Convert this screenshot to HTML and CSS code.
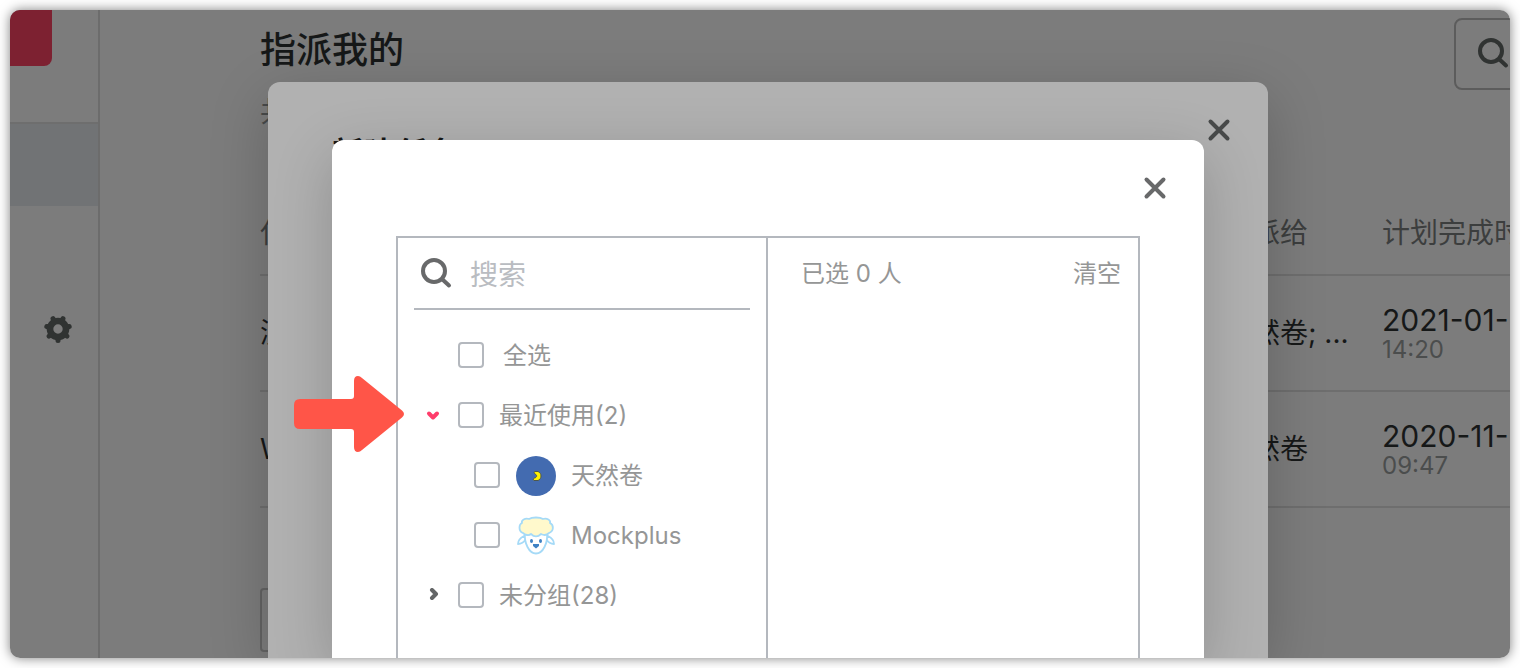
FILE: index.html
```html
<!DOCTYPE html>
<html lang="zh-CN">
<head>
<meta charset="utf-8">
<title>指派我的</title>
<link rel="stylesheet" href="styles.css">
</head>
<body>
<div class="frame">
  <nav class="sidebar" aria-label="导航">
    <div class="sidebar-top"><span class="brand"></span></div>
    <div class="sidebar-active"></div>
    <button class="icon-button settings" type="button" aria-label="设置">
      <svg width="30" height="30" viewBox="-15 -15 30 30" aria-hidden="true">
        <g stroke="#303332" stroke-width="5" stroke-linecap="round" stroke-linejoin="round" fill="none">
          <path d="M0 8V11.500"/>
          <path d="M0 8V11.500" transform="rotate(51.43)"/>
          <path d="M0 8V11.500" transform="rotate(102.86)"/>
          <path d="M0 8V11.500" transform="rotate(154.29)"/>
          <path d="M0 8V11.500" transform="rotate(205.71)"/>
          <path d="M0 8V11.500" transform="rotate(257.14)"/>
          <path d="M0 8V11.500" transform="rotate(308.57)"/>
          <circle r="8" stroke-width="6.600"/>
        </g>
      </svg>
    </button>
  </nav>

  <main class="main">
    <header class="main-header">
      <h1 class="title">指派我的</h1>
      <button class="search-box" type="button" aria-label="搜索任务">
        <svg width="32" height="32" viewBox="0 0 32 32" fill="none" stroke="#303332" stroke-width="4" stroke-linecap="round" aria-hidden="true"><circle cx="14" cy="13" r="11"/><path d="M22.500 21.500L29 27.500"/></svg>
      </button>
    </header>
    <p class="count">共 2 条</p>
    <table class="tasks">
      <colgroup><col><col class="col-assignee"><col class="col-date"></colgroup>
      <thead>
        <tr><th>任务名称</th><th>指派给</th><th>计划完成时</th></tr>
      </thead>
      <tbody>
        <tr><td>测试</td><td>天然卷; ...</td><td class="date">2021-01-<span class="time">14:20</span></td></tr>
        <tr><td>Web</td><td>天然卷</td><td class="date">2020-11-<span class="time">09:47</span></td></tr>
      </tbody>
    </table>
    <button class="pager" type="button" aria-label="上一页"></button>
  </main>

  <div class="layer">
    <section class="dialog dialog-back" aria-label="新建任务">
      <h2 class="dialog-title">新建任务</h2>
      <button class="icon-button close" type="button" aria-label="关闭新建任务">
        <svg width="24" height="24" viewBox="0 0 24 24" fill="none" stroke="#484a4a" stroke-width="4" stroke-linecap="round" aria-hidden="true"><path d="M3.500 3.500L20.500 20.500M20.500 3.500L3.500 20.500"/></svg>
      </button>
    </section>
  </div>

  <div class="layer layer-front">
    <section class="dialog dialog-front" role="dialog" aria-label="选择成员">
      <button class="icon-button close" type="button" aria-label="关闭">
        <svg width="24" height="24" viewBox="0 0 24 24" fill="none" stroke="#68696a" stroke-width="4" stroke-linecap="round" aria-hidden="true"><path d="M3.500 3.500L20.500 20.500M20.500 3.500L3.500 20.500"/></svg>
      </button>
      <div class="picker">
        <div class="candidates">
          <label class="search">
            <svg width="32" height="32" viewBox="0 0 32 32" fill="none" stroke="#68696a" stroke-width="4" stroke-linecap="round" aria-hidden="true"><circle cx="14" cy="14" r="11"/><path d="M22.500 22.500L29 28.500"/></svg>
            <input class="search-input" type="text" placeholder="搜索" aria-label="搜索成员">
          </label>
          <ul class="tree">
            <li class="row">
              <span class="toggle"></span>
              <label class="choice"><input class="check" type="checkbox"><span class="name all">全选</span></label>
            </li>
            <li class="row">
              <button class="icon-button toggle" type="button" aria-label="收起最近使用">
                <svg width="14" height="14" viewBox="0 0 14 14" fill="none" stroke="#ff3d6b" stroke-width="4" stroke-linecap="round" stroke-linejoin="round" aria-hidden="true"><path d="M3 5.500L7 9.500L11 5.500"/></svg>
              </button>
              <label class="choice"><input class="check" type="checkbox"><span class="name">最近使用(2)</span></label>
            </li>
            <li class="row row-child">
              <label class="choice"><input class="check" type="checkbox">
                <svg class="avatar" width="42" height="42" viewBox="0 0 42 42" aria-hidden="true"><g transform="translate(1 2)"><circle cx="20" cy="20" r="20" fill="#436bb0"/><path d="M18.500 15.500H22C26 17 26 23 22 24.500H18C17 24 17 22.500 18.500 22C21 21.500 21.500 19 19 18C18 17 18 16 18.500 15.500Z" fill="#fff200" stroke="#4d574d" stroke-width="1"/></g></svg>
                <span class="name">天然卷</span></label>
            </li>
            <li class="row row-child">
              <label class="choice"><input class="check" type="checkbox">
                <svg class="avatar" width="42" height="42" viewBox="0 0 42 42" stroke-linejoin="round" aria-hidden="true">
                  <g transform="translate(1 2)">
                  <g fill="#fff" stroke="#a5daf7" stroke-width="1.800">
                    <path d="M8 20C4 22 2 25 2 28C5 28 8 26 10 23Z"/>
                    <path d="M32 20C36 22 38 25 38 28C35 28 32 26 30 23Z"/>
                    <path d="M9 17C8 27 13 37.500 20 37.500C27 37.500 32 27 31 17Z"/>
                    <path d="M7 17C2 15 3 8 6 7C5 4 9 2 13 3C16 1 24 1 27 3C31 2 35 4 34 7C38 9 38 15 33 17C30 20 27 19 25 18C22 21 18 21 15 18C13 20 9 19 7 17Z" fill="#fff9cc"/>
                  </g>
                  <g fill="#3f82c4"><ellipse cx="15.500" cy="25" rx="1.500" ry="2"/><ellipse cx="24.500" cy="25" rx="1.500" ry="2"/><path d="M17 28H23V30L20 32.500L17 30Z"/></g>
                  </g>
                </svg>
                <span class="name">Mockplus</span></label>
            </li>
            <li class="row">
              <button class="icon-button toggle" type="button" aria-label="展开未分组">
                <svg width="14" height="14" viewBox="0 0 14 14" fill="none" stroke="#636566" stroke-width="4" stroke-linecap="round" stroke-linejoin="round" aria-hidden="true"><path d="M6 2L10 6L6 10"/></svg>
              </button>
              <label class="choice"><input class="check" type="checkbox"><span class="name">未分组(28)</span></label>
            </li>
          </ul>
        </div>
        <div class="selected">
          <div class="selected-header">
            <span>已选 0 人</span>
            <button class="clear" type="button">清空</button>
          </div>
        </div>
      </div>
      <svg class="pointer" width="110" height="76" viewBox="0 0 110 76" aria-hidden="true"><path d="M6 23H57Q60 23 60 20V5Q60 0 64 0Q66 0 68 2L108 34.500Q112 38 108 41.500L68 74Q66 76 64 76Q60 76 60 71V56Q60 53 57 53H6Q0 53 0 47V29Q0 23 6 23Z" fill="#ff5548"/></svg>
    </section>
  </div>
</div>
</body>
</html>
```

FILE: styles.css
```css
* {
  box-sizing: border-box;
}

body {
  margin: 0;
  height: 100vh;
  padding: 10px;
  background: #fff;
  font-family: Inter, "Noto Sans CJK SC", sans-serif;
  color: #161818;
}

button {
  font: inherit;
  color: inherit;
  padding: 0;
  border: 0;
  background: none;
}

svg {
  display: block;
  flex-shrink: 0;
}

.frame {
  position: relative;
  display: flex;
  height: 100%;
  overflow: hidden;
  border-radius: 10px;
  background: #7c7c7c;
}

body::before {
  content: "";
  position: absolute;
  inset: 10px;
  border-radius: 10px;
  box-shadow: 0 0 12px rgba(0, 0, 0, 0.5);
}

.sidebar {
  display: flex;
  flex-direction: column;
  align-items: center;
  flex: 0 0 90px;
  border-right: 2px solid #6c6c6c;
}

.sidebar-top {
  width: 100%;
  height: 114px;
  border-bottom: 2px solid #6e6e6e;
}

.brand {
  display: block;
  width: 42px;
  height: 56px;
  border-radius: 0 0 8px 0;
  background: #7d2131;
}

.sidebar-active {
  width: 100%;
  height: 82px;
  background: #717375;
}

.icon-button {
  display: flex;
  align-items: center;
  justify-content: center;
}

.settings {
  margin: 108px 0 0 8px;
}

.main {
  flex: 1;
  min-width: 0;
  padding: 8px 0 0 160px;
}

.main-header {
  display: flex;
  align-items: flex-start;
  justify-content: space-between;
}

.title {
  margin: 0;
  font-size: 36px;
  line-height: 64px;
  font-weight: 500;
}

.search-box {
  flex: 0 0 240px;
  display: flex;
  align-items: center;
  height: 72px;
  margin-right: -184px;
  padding-left: 21px;
  border: 2px solid #5c5c5c;
  border-radius: 8px;
}

.count {
  margin: 0;
  font-size: 28px;
  line-height: 44px;
  color: #484a4a;
}

.tasks {
  width: 100%;
  margin-top: 56px;
  table-layout: fixed;
  border-spacing: 0;
  font-size: 28px;
  line-height: 30px;
  white-space: nowrap;
}

.col-assignee {
  width: 158px;
}

.col-date {
  width: 128px;
}

.tasks th,
.tasks td {
  padding: 0;
  text-align: left;
  border-bottom: 2px solid #6e6e6e;
}

.tasks th {
  height: 86px;
  padding-top: 2px;
  font-weight: 400;
  color: #3c3e3e;
}

.tasks td {
  height: 116px;
}

.tasks .date {
  padding-top: 4px;
  font-size: 30px;
}

.time {
  display: block;
  font-size: 24px;
  color: #4b4d4d;
}

.pager {
  display: block;
  width: 64px;
  height: 64px;
  margin-top: 80px;
  border: 2px solid #636363;
  border-radius: 4px;
}

.layer {
  position: absolute;
  inset: 72px 0 0;
  display: flex;
  justify-content: center;
  padding-left: 16px;
}

.layer-front {
  top: 130px;
}

.dialog {
  position: relative;
  max-width: 100%;
  border-radius: 12px 12px 0 0;
  box-shadow: 0 16px 60px rgba(0, 0, 0, 0.2);
}

.dialog-back {
  display: flex;
  align-items: flex-start;
  justify-content: space-between;
  width: 1000px;
  padding: 36px 37px 0 64px;
  background: #b1b1b1;
}

.dialog-title {
  margin: 12px 0 0;
  font-size: 32px;
  line-height: 48px;
  font-weight: 700;
}

.close {
  height: 24px;
}

.dialog-front {
  display: flex;
  flex-direction: column;
  width: 872px;
  padding: 36px 64px 0;
  background: #fff;
  color: #959696;
}

.dialog-front .close {
  align-self: flex-end;
  margin-right: -27px;
}

.picker {
  flex: 1;
  display: grid;
  grid-template-columns: repeat(2, minmax(0, 1fr));
  margin-top: 36px;
  border: 2px solid #b4b8be;
  border-bottom: 0;
  font-size: 24px;
  line-height: 32px;
}

.candidates {
  padding: 0 16px;
  border-right: 2px solid #b4b8be;
}

.search {
  display: flex;
  align-items: center;
  gap: 18px;
  height: 72px;
  padding-left: 6px;
  border-bottom: 2px solid #b4b8be;
}

.search-input {
  flex: 1;
  min-width: 0;
  padding: 4px 0 0;
  border: 0;
  outline: 0;
  background: none;
  font: inherit;
  font-size: 28px;
}

.search-input::placeholder {
  color: #b9bcc1;
  opacity: 1;
}

.tree {
  margin: 15px 0 0;
  padding: 0;
  list-style: none;
}

.row {
  display: flex;
  align-items: center;
  gap: 18px;
  height: 60px;
  padding-left: 12px;
}

.row-child {
  padding-left: 60px;
}

.toggle {
  width: 14px;
}

.choice {
  display: flex;
  align-items: center;
  gap: 15px;
}

.avatar {
  margin-right: -1px;
}

.name {
  padding-top: 2px;
}

.all {
  padding-left: 4px;
}

.check {
  appearance: none;
  width: 26px;
  height: 26px;
  margin: 0;
  border: 2px solid #b4b8be;
  border-radius: 4px;
}

.selected-header {
  display: flex;
  align-items: center;
  justify-content: space-between;
  height: 72px;
  padding: 0 17px 0 33px;
}

.pointer {
  position: absolute;
  left: -38px;
  top: 236px;
}
```
